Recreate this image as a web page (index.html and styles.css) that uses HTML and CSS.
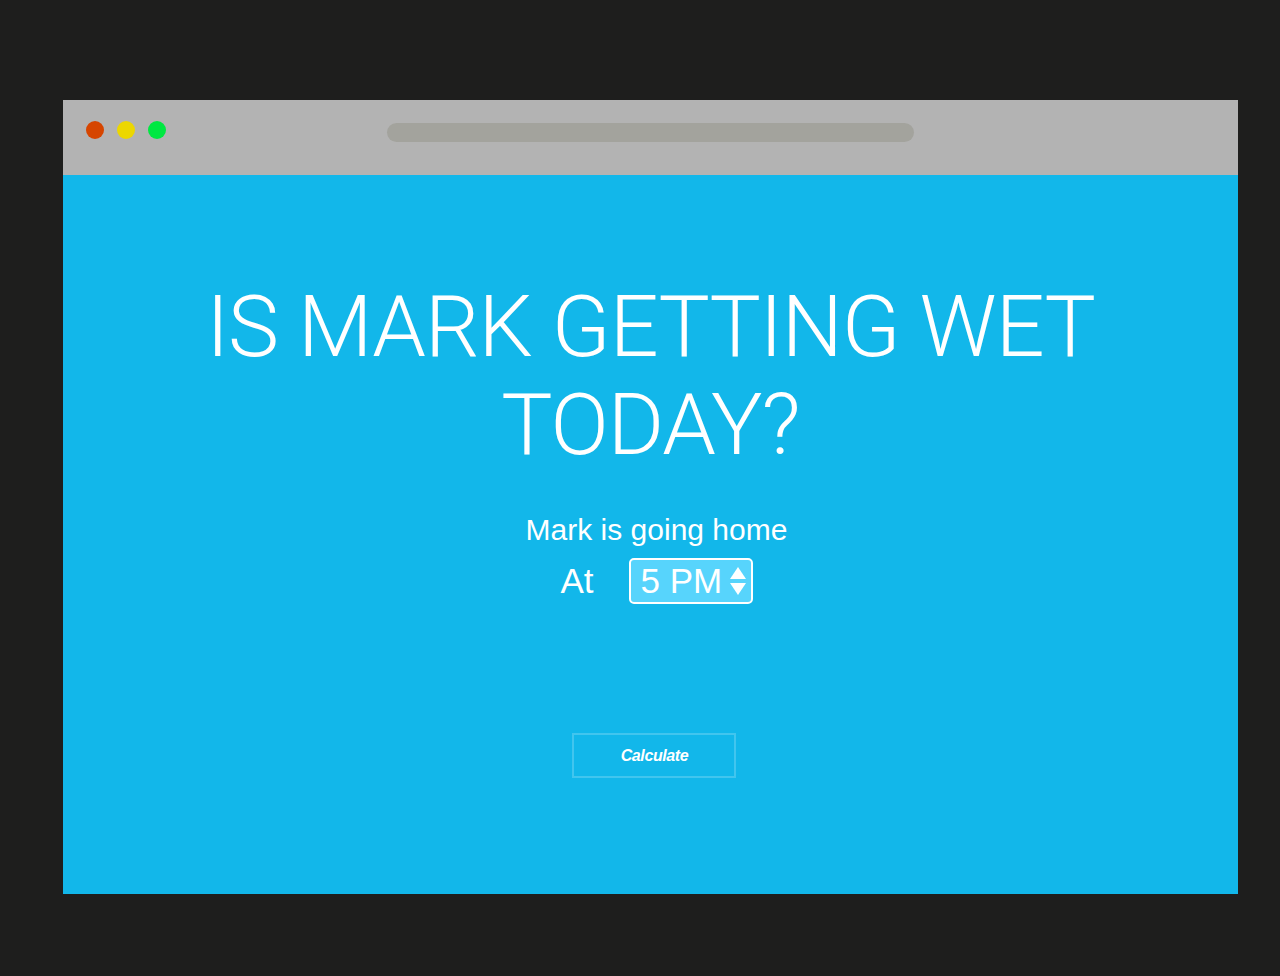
FILE: index.html
```html
<!DOCTYPE html>
<html lang="en">
<head>
<meta charset="utf-8">
<title>Is Mark getting wet today?</title>
<link rel="stylesheet" href="styles.css">
</head>
<body>
<div class="page">
  <div class="window">
    <div class="titlebar">
      <div class="dots">
        <span class="dot dot-red"></span>
        <span class="dot dot-yellow"></span>
        <span class="dot dot-green"></span>
      </div>
      <div class="urlbar"></div>
    </div>
    <main class="content">
      <h1 class="headline">IS MARK GETTING WET TODAY?</h1>
      <div class="form">
        <p class="subtitle">Mark is going home</p>
        <div class="time-row">
          <span class="at">At</span>
          <div class="select">
            <span class="select-value">5 PM</span>
            <svg class="select-arrows" width="16" height="28" viewBox="0 0 16 28">
              <polygon points="8,0 16,12 0,12" fill="#fff"/>
              <polygon points="0,16 16,16 8,28" fill="#fff"/>
            </svg>
          </div>
        </div>
        <button class="calc" type="button">Calculate</button>
      </div>
    </main>
  </div>
</div>
</body>
</html>
```

FILE: styles.css
```css
html, body {
  margin: 0;
  padding: 0;
  background: #1e1e1d;
}

.page {
  padding: 100px 0 0 63px;
  height: 976px;
  box-sizing: border-box;
}

.window {
  width: 1175px;
}

.titlebar {
  height: 75px;
  background: #b3b3b3;
  display: grid;
  grid-template-columns: 1fr 527px 1fr;
  align-items: start;
}

.dots {
  display: flex;
  gap: 13px;
  padding: 21px 0 0 23px;
}

.dot {
  width: 18px;
  height: 18px;
  border-radius: 50%;
  display: block;
}

.dot-red { background: #d64500; }
.dot-yellow { background: #ecd700; }
.dot-green { background: #00e842; }

.urlbar {
  margin-top: 23px;
  height: 19px;
  border-radius: 10px;
  background: #a3a39d;
}

.content {
  height: 719px;
  background: #12b7ea;
  padding-top: 103px;
  box-sizing: border-box;
  color: #fff;
  display: flex;
  flex-direction: column;
  align-items: center;
}

.headline {
  margin: 0;
  max-width: 1000px;
  font-family: Roboto, "Liberation Sans", sans-serif;
  font-weight: 300;
  font-size: 86px;
  line-height: 98px;
  letter-spacing: -1px;
  text-align: center;
}

.form {
  display: flex;
  flex-direction: column;
  align-items: center;
  padding-left: 12px;
  font-family: "Liberation Sans", Arial, sans-serif;
}

.subtitle {
  margin: 39px 0 0;
  font-size: 30px;
  line-height: 34px;
}

.time-row {
  margin-top: 11px;
  display: flex;
  align-items: baseline;
  gap: 35px;
}

.at {
  font-size: 35px;
}

.select {
  width: 124px;
  height: 46px;
  box-sizing: border-box;
  border: 2px solid #fff;
  border-radius: 5px;
  background: #57d4fc;
  display: flex;
  align-items: baseline;
  justify-content: space-between;
  padding: 0 5px 0 10px;
}

.select-value {
  font-size: 35px;
  line-height: 42px;
}

.select-arrows {
  align-self: center;
  display: block;
}

.calc {
  margin-top: 129px;
  width: 164px;
  height: 45px;
  background: transparent;
  border: 2px solid #41c5ee;
  color: #fff;
  font-family: "Liberation Sans", Arial, sans-serif;
  font-style: italic;
  font-weight: bold;
  font-size: 16px;
  letter-spacing: -0.4px;
  padding: 0;
  margin-left: -4px;
}
```
